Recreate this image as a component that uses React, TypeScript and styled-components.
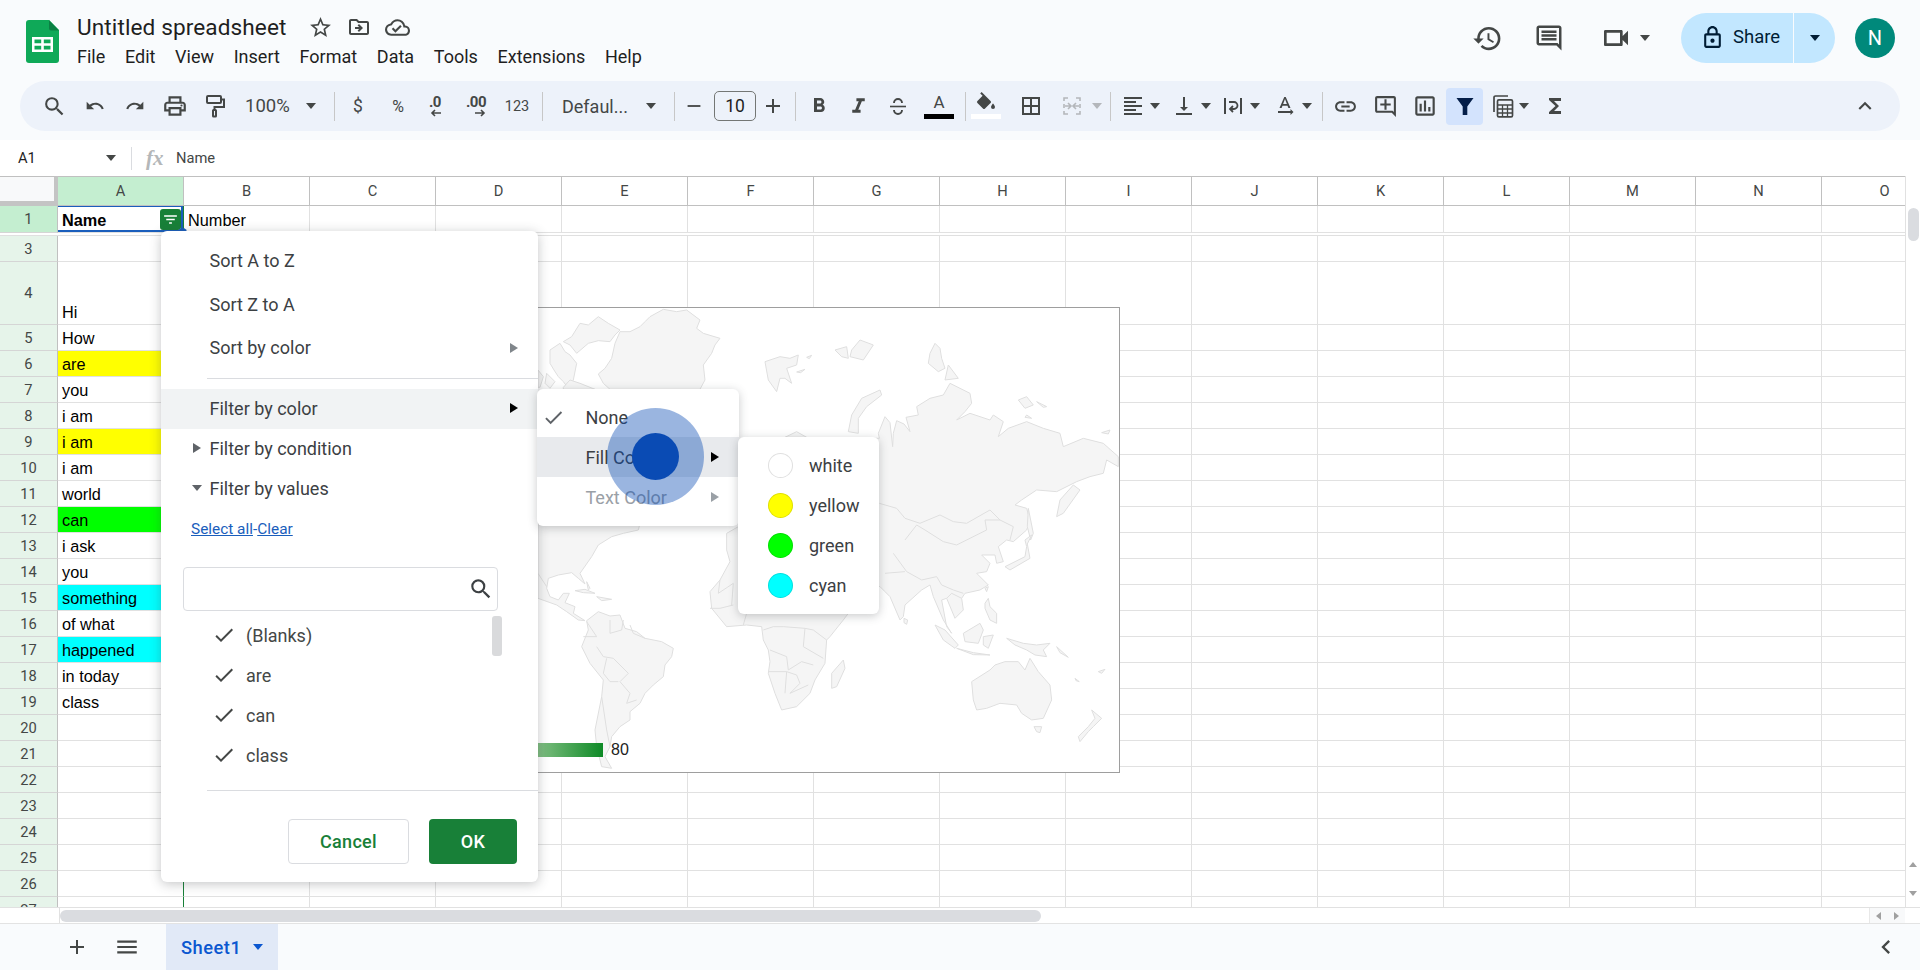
import React from "react";
import styled, { createGlobalStyle } from "styled-components";
import {
  MdSearch, MdUndo, MdRedo, MdOutlinePrint, MdStarBorder, MdOutlineDriveFileMove,
  MdOutlineCloudDone, MdHistory, MdOutlineComment, MdOutlineVideocam, MdOutlineLock, MdFormatBold,
  MdFormatItalic, MdBorderAll, MdFormatAlignLeft, MdVerticalAlignBottom,
  MdTextRotationNone, MdLink, MdOutlineAddComment, MdOutlineInsertChart, MdFunctions, MdExpandLess,
  MdAdd, MdRemove, MdMenu, MdCheck, MdChevronLeft, MdFilterList,
} from "react-icons/md";

const GlobalStyle = createGlobalStyle`
  html, body { margin: 0; padding: 0; background: #fff; }
  * { box-sizing: border-box; }
`;

const Page = styled.div`
  position: relative;
  width: 1920px;
  height: 970px;
  overflow: hidden;
  display: flex;
  flex-direction: column;
  background: #f9fbfd;
  font-family: Roboto, "Liberation Sans", sans-serif;
  color: #444746;
`;

/* ---------- header ---------- */
const TopBar = styled.header`
  height: 81px;
  flex: none;
  display: flex;
  padding: 20px 25px 0 26px;
`;
const TitleCol = styled.div`
  margin-left: 18px;
  margin-top: -7px;
`;
const TitleRow = styled.div`
  display: flex;
  align-items: center;
  height: 28px;
`;
const Title = styled.div`
  font-size: 22.6px;
  color: #1f1f1f;
  width: 210px;
  white-space: nowrap;
  letter-spacing: 0.1px;
`;
const TitleIcons = styled.div`
  display: flex;
  align-items: center;
  gap: 14px;
  margin-left: 21px;
  color: #444746;
`;
const MenuBar = styled.nav`
  display: flex;
  gap: 19.7px;
  margin-top: 5px;
  font-size: 18px;
  color: #1f1f1f;
`;
const RightGroup = styled.div`
  margin-left: auto;
  margin-top: -7px;
  display: flex;
  align-items: center;
  height: 50px;
`;
const HeadBtn = styled.div<{ $w: number; $pl?: number }>`
  width: ${(p) => p.$w}px;
  padding-left: ${(p) => p.$pl ?? 0}px;
  display: flex;
  align-items: center;
  justify-content: ${(p) => (p.$pl ? "flex-start" : "center")};
  gap: 8px;
  color: #444746;
`;
const ShareBtn = styled.div`
  width: 154px;
  height: 50px;
  border-radius: 25px;
  background: #c2e7ff;
  color: #001d35;
  display: flex;
  align-items: center;
  font-size: 18.5px;
`;
const ShareMain = styled.div`
  width: 113px;
  height: 100%;
  display: flex;
  align-items: center;
  padding-left: 19px;
  padding-bottom: 2px;
  gap: 8px;
  border-right: 1px solid #f9fbfd;
`;
const ShareDrop = styled.div`
  flex: 1;
  display: flex;
  justify-content: center;
`;
const Avatar = styled.div`
  width: 40px;
  height: 40px;
  margin-left: 20px;
  border-radius: 50%;
  background: #00897b;
  color: #fff;
  font-size: 20px;
  display: flex;
  align-items: center;
  justify-content: center;
`;

const Caret = styled.span<{ $color?: string }>`
  display: inline-block;
  width: 0;
  height: 0;
  flex: none;
  border-left: 5.5px solid transparent;
  border-right: 5.5px solid transparent;
  border-top: 6px solid ${(p) => p.$color ?? "#444746"};
`;

/* ---------- toolbar ---------- */
const Toolbar = styled.div`
  flex: none;
  height: 50px;
  margin: 0 20px 9px;
  padding: 0 14px;
  border-radius: 25px;
  background: #edf2fa;
  display: flex;
  align-items: center;
`;
const Tool = styled.div<{ $w: number; $gap?: number; $active?: boolean; $pl?: number; $size?: number }>`
  width: ${(p) => p.$w}px;
  height: ${(p) => (p.$active ? 37 : 40)}px;
  flex: none;
  display: flex;
  align-items: center;
  justify-content: ${(p) => (p.$pl !== undefined ? "space-between" : "center")};
  gap: ${(p) => p.$gap ?? 5}px;
  padding-left: ${(p) => p.$pl ?? 0}px;
  padding-right: ${(p) => (p.$pl !== undefined ? 18 : 0)}px;
  border-radius: 4px;
  background: ${(p) => (p.$active ? "#d3e3fd" : "transparent")};
  color: #444746;
  font-size: ${(p) => p.$size ?? 17.5}px;
`;
const Sep = styled.div<{ $ml?: number; $mr?: number }>`
  flex: none;
  width: 1px;
  height: 29px;
  background: #c7c7c7;
  margin-left: ${(p) => p.$ml ?? 0}px;
  margin-right: ${(p) => p.$mr ?? 0}px;
`;
const SizeBox = styled.div`
  width: 42px;
  height: 30px;
  margin-left: 1px;
  flex: none;
  border: 1px solid #747775;
  border-radius: 5px;
  font-size: 17.5px;
  display: flex;
  align-items: center;
  justify-content: center;
  color: #1f1f1f;
`;
const Stack = styled.div`
  display: flex;
  flex-direction: column;
  align-items: center;
  height: 30px;
  margin-bottom: 4px;
  justify-content: flex-end;
`;
const ColorBar = styled.div<{ $color: string }>`
  width: 30px;
  height: 5px;
  background: ${(p) => p.$color};
  margin-top: 1px;
`;
const ColorLetter = styled.span`
  font-size: 17px;
  line-height: 16px;
  margin-bottom: 3px;
  color: #444746;
`;
const DecText = styled.div`
  display: flex;
  flex-direction: column;
  align-items: flex-end;
  font-size: 15px;
  font-weight: 700;
  line-height: 14px;
  letter-spacing: -0.5px;
`;
const Spacer = styled.div`
  flex: 1;
`;

/* ---------- formula bar ---------- */
const FormulaBar = styled.div`
  flex: none;
  height: 36px;
  background: #fff;
  display: flex;
  align-items: center;
  font-size: 14.7px;
`;
const NameBox = styled.div`
  width: 132px;
  padding: 0 15px 0 18px;
  display: flex;
  align-items: center;
  justify-content: space-between;
  color: #1f1f1f;
  border-right: 1px solid #dadce0;
  height: 23px;
`;
const Fx = styled.span`
  font-family: "Liberation Serif", serif;
  font-style: italic;
  font-size: 21px;
  font-weight: 700;
  color: #b4b7b9;
  margin-left: 14px;
  width: 30px;
`;
const FormulaText = styled.span`
  color: #444746;
`;

/* ---------- sheet ---------- */
const GridArea = styled.div`
  flex: 1;
  min-height: 0;
  display: flex;
  background: #fff;
`;
const Sheet = styled.div`
  width: 1905px;
  overflow: hidden;
  display: flex;
  flex-direction: column;
`;
const SheetRow = styled.div<{ $h: number }>`
  display: flex;
  flex: none;
  height: ${(p) => p.$h}px;
`;
const Corner = styled.div`
  width: 58px;
  flex: none;
  background: #f8f9fa;
  border-top: 1px solid #c0c0c0;
  border-right: 4px solid #c4c4c4;
  border-bottom: 5px solid #c4c4c4;
`;
const ColHead = styled.div<{ $sel?: boolean }>`
  width: 126px;
  flex: none;
  display: flex;
  align-items: center;
  justify-content: center;
  font-size: 14.7px;
  color: #444746;
  background: ${(p) => (p.$sel ? "#c4eed0" : "#fff")};
  border-top: 1px solid #c0c0c0;
  border-right: 1px solid #c0c0c0;
  border-bottom: 1px solid #c0c0c0;
`;
const RowHead = styled.div<{ $sel?: boolean }>`
  width: 58px;
  flex: none;
  display: flex;
  align-items: center;
  justify-content: center;
  font-size: 14.7px;
  color: #444746;
  background: ${(p) => (p.$sel ? "#c4eed0" : "#e6f4ea")};
  border-right: 1px solid #c0c0c0;
  border-bottom: 1px solid #d5d5d5;
`;
const Cell = styled.div<{ $fill?: string; $bold?: boolean; $first?: boolean }>`
  position: relative;
  width: 126px;
  flex: none;
  display: flex;
  align-items: flex-end;
  padding: 0 4px;
  overflow: hidden;
  white-space: nowrap;
  font-family: "Liberation Sans", Arial, sans-serif;
  font-size: 16.3px;
  line-height: 23px;
  color: #000;
  font-weight: ${(p) => (p.$bold ? 700 : 400)};
  background: ${(p) => p.$fill ?? "#fff"};
  border-right: 1px solid ${(p) => (p.$first ? "#188038" : "#e1e1e1")};
  border-bottom: 1px solid #e1e1e1;
`;
const Selection = styled.div`
  position: absolute;
  inset: 0;
  border-top: 1px solid #1a5ebc;
  border-right: 2px solid #1a5ebc;
  border-bottom: 2px solid #1a5ebc;
  pointer-events: none;
`;
const FilterChip = styled.div`
  position: absolute;
  right: 2px;
  top: 3px;
  width: 21px;
  height: 21px;
  border-radius: 3px;
  background: #188038;
  color: #fff;
  display: flex;
  align-items: center;
  justify-content: center;
`;
const FillHandle = styled.div`
  position: absolute;
  left: 178px;
  top: 228px;
  width: 9px;
  height: 9px;
  border-radius: 50%;
  background: #1a5ebc;
`;
const FreezeGap = styled.div`
  flex: none;
  height: 3px;
  background: #fff;
  border-bottom: 1.5px solid #e0e0e0;
`;
const VScroll = styled.div`
  width: 15px;
  flex: none;
  display: flex;
  flex-direction: column;
  align-items: center;
  padding-top: 32px;
  background: #fff;
  border-left: 1px solid #e1e1e1;
`;
const VThumb = styled.div`
  width: 11px;
  height: 33px;
  border-radius: 6px;
  background: #dadce0;
`;
const VArrows = styled.div`
  margin-top: auto;
  height: 38px;
  margin-bottom: 9px;
  width: 100%;
  display: flex;
  flex-direction: column;
  align-items: center;
  justify-content: space-between;
  padding: 2px 0;
`;
const SmallTri = styled.span<{ $dir: "up" | "down" | "left" | "right" }>`
  width: 0;
  height: 0;
  border: 4px solid transparent;
  ${(p) => (p.$dir === "up" ? "border-bottom: 5px solid #a0a0a0; border-top-width: 0;" : "")}
  ${(p) => (p.$dir === "down" ? "border-top: 5px solid #a0a0a0; border-bottom-width: 0;" : "")}
  ${(p) => (p.$dir === "left" ? "border-right: 5px solid #a0a0a0; border-left-width: 0;" : "")}
  ${(p) => (p.$dir === "right" ? "border-left: 5px solid #a0a0a0; border-right-width: 0;" : "")}
`;
const HScroll = styled.div`
  flex: none;
  height: 16px;
  background: #fff;
  display: flex;
  align-items: center;
  border-top: 1px solid #e1e1e1;
`;
const HLead = styled.div`
  width: 60px;
  height: 100%;
  border-right: 1px solid #e1e1e1;
  flex: none;
`;
const HThumb = styled.div`
  width: 981px;
  height: 12px;
  border-radius: 6px;
  background: #dadce0;
`;
const HArrows = styled.div`
  margin-left: auto;
  width: 36px;
  height: 100%;
  margin-right: 15px;
  background: #f8f9fa;
  display: flex;
  align-items: center;
  justify-content: space-around;
  border-left: 1px solid #e8e8e8;
`;

/* ---------- tabs ---------- */
const TabBar = styled.footer`
  flex: none;
  height: 47px;
  display: flex;
  align-items: center;
  border-top: 1px solid #e3e3e3;
  padding-left: 62px;
  color: #444746;
`;
const TabIcon = styled.div`
  width: 50px;
  display: flex;
  justify-content: center;
  margin-left: -10px;
  margin-right: 10px;
`;
const SheetTab = styled.div`
  margin-left: 4px;
  width: 112px;
  height: 46px;
  background: #e1e9f7;
  color: #0b57d0;
  font-weight: 500;
  font-size: 18.3px;
  letter-spacing: 0.5px;
  display: flex;
  align-items: center;
  padding-left: 15px;
  gap: 12px;
`;
const CollapseTabs = styled.div`
  margin-left: auto;
  margin-right: 20px;
  display: flex;
`;

/* ---------- chart overlay ---------- */
const ChartCard = styled.div`
  position: absolute;
  left: 400px;
  top: 307px;
  width: 720px;
  height: 466px;
  background: #fff;
  border: 1px solid #9e9e9e;
`;
const ChartSvg = styled.svg`
  display: block;
  width: 100%;
  height: 100%;
`;
const Legend = styled.div`
  position: absolute;
  left: 130px;
  bottom: 13px;
  display: flex;
  align-items: center;
  gap: 8px;
  font-family: "Liberation Sans", Arial, sans-serif;
  font-size: 16px;
  color: #222;
`;
const LegendBar = styled.div`
  width: 72px;
  height: 14px;
  background: linear-gradient(90deg, #8cc48c, #0e8a26);
`;

/* ---------- filter menu ---------- */
const Panel = styled.div`
  position: absolute;
  left: 161px;
  top: 231px;
  width: 377px;
  height: 651px;
  background: #fff;
  border-radius: 6px;
  padding-top: 8px;
  box-shadow: 0 2px 12px rgba(60, 64, 67, 0.3);
  font-size: 18px;
  color: #3c4043;
`;
const MenuItem = styled.div<{ $h?: number; $shade?: string; $muted?: boolean; $pl?: number; $up?: boolean }>`
  height: ${(p) => p.$h ?? 40}px;
  display: flex;
  align-items: center;
  padding-left: ${(p) => p.$pl ?? 48.5}px;
  padding-right: 20px;
  padding-bottom: ${(p) => (p.$up ? 2 : 0)}px;
  background: ${(p) => p.$shade ?? "transparent"};
  color: ${(p) => (p.$muted ? "#9aa0a6" : "#3c4043")};
`;
const ItemLabel = styled.span`
  flex: 1;
`;
const RightTri = styled.span<{ $color?: string }>`
  width: 0;
  height: 0;
  flex: none;
  border-top: 5px solid transparent;
  border-bottom: 5px solid transparent;
  border-left: 8px solid ${(p) => p.$color ?? "#000"};
`;
const LeadSlot = styled.span`
  width: 21px;
  margin-right: 2.5px;
  display: flex;
  justify-content: center;
  align-items: center;
`;
const Divider = styled.div<{ $mt: number; $mb?: number }>`
  height: 1px;
  margin: ${(p) => p.$mt}px 0 ${(p) => p.$mb ?? 0}px 46px;
  background: #dadce0;
`;
const LinkRow = styled.div`
  height: 40px;
  display: flex;
  align-items: center;
  padding-left: 30px;
  font-size: 15.4px;
  color: #1a5ebc;
`;
const Link = styled.span`
  text-decoration: underline;
`;
const SearchBox = styled.div`
  margin: 18px 0 0 22px;
  width: 315px;
  height: 44px;
  border: 1px solid #dadce0;
  border-radius: 4px;
  display: flex;
  align-items: center;
  justify-content: flex-end;
  padding-right: 3px;
  color: #3c4043;
`;
const ValueList = styled.div`
  margin-top: 5px;
  height: 160px;
  display: flex;
`;
const ValueRows = styled.div`
  width: 331px;
  padding-left: 51px;
`;
const ValueRow = styled.div`
  height: 40px;
  display: flex;
  align-items: center;
  gap: 10px;
  padding-bottom: 2px;
  color: #444746;
`;
const ListThumb = styled.div`
  width: 10px;
  height: 40px;
  border-radius: 3px;
  background: #d9dadc;
`;
const Actions = styled.div`
  margin-top: 28px;
  display: flex;
  justify-content: flex-end;
  gap: 20px;
  padding-right: 21px;
`;
const Button = styled.div<{ $primary?: boolean }>`
  width: ${(p) => (p.$primary ? 88 : 121)}px;
  height: 45px;
  border-radius: 4px;
  display: flex;
  align-items: center;
  justify-content: center;
  font-size: 18px;
  font-weight: 500;
  letter-spacing: 0.3px;
  background: ${(p) => (p.$primary ? "#188038" : "#fff")};
  color: ${(p) => (p.$primary ? "#fff" : "#188038")};
  border: ${(p) => (p.$primary ? "none" : "1px solid #dadce0")};
`;
const ColorMenu = styled.div`
  position: absolute;
  left: 537px;
  top: 389px;
  width: 202px;
  height: 137px;
  padding-top: 8px;
  background: #fff;
  border-radius: 6px;
  box-shadow: 0 2px 10px rgba(60, 64, 67, 0.28);
  font-size: 18px;
`;
const CheckSlot = styled.span`
  width: 48.5px;
  padding-left: 5px;
  display: flex;
  color: #5f6368;
`;
const SwatchMenu = styled.div`
  position: absolute;
  left: 738px;
  top: 437px;
  width: 141px;
  height: 177px;
  padding: 8.7px 0 0 30px;
  background: #fff;
  border-radius: 6px;
  box-shadow: 0 2px 10px rgba(60, 64, 67, 0.28);
  font-size: 18px;
  color: #3c4043;
`;
const SwatchRow = styled.div`
  height: 40px;
  display: flex;
  align-items: center;
  gap: 16px;
`;
const Swatch = styled.span<{ $color: string }>`
  width: 25px;
  height: 25px;
  border-radius: 50%;
  flex: none;
  background: ${(p) => p.$color};
  border: 1px solid rgba(0, 0, 0, 0.12);
`;
const ClickHalo = styled.div`
  position: absolute;
  left: 607px;
  top: 408px;
  width: 97px;
  height: 97px;
  border-radius: 50%;
  background: rgba(10, 75, 180, 0.41);
  display: flex;
  align-items: center;
  justify-content: center;
`;
const ClickDot = styled.div`
  width: 47px;
  height: 47px;
  border-radius: 50%;
  background: #0a4bb4;
`;

/* ---------- drawings ---------- */
const SheetsLogo = () => (
  <svg width="33" height="43" viewBox="0 0 33 43">
    <path d="M3 0h20l10 10v30a3 3 0 0 1-3 3H3a3 3 0 0 1-3-3V3a3 3 0 0 1 3-3z" fill="#0fa958" />
    <path d="M23 0l10 10.5H25a2 2 0 0 1-2-2z" fill="#0b8043" />
    <path d="M6 17h21v15H6z M8.5 19.5v3.7h6.7v-3.7z M17.8 19.5v3.7h6.7v-3.7z M8.5 25.8v3.7h6.7v-3.7z M17.8 25.8v3.7h6.7v-3.7z" fill="#fff" fillRule="evenodd" />
  </svg>
);
const PaintIcon = () => (
  <svg width="24" height="26" viewBox="0 0 24 26" fill="none" stroke="#444746" strokeWidth="2">
    <rect x="4" y="3" width="14" height="7" rx="1" />
    <path d="M18 6.5h3v7.5h-9.5v3" />
    <rect x="10" y="17" width="3" height="6.5" rx=".6" />
  </svg>
);
const StrikeIcon = () => (
  <svg width="24" height="24" viewBox="0 0 24 24" fill="none" stroke="#444746" strokeWidth="1.9">
    <path d="M8 9a4 4 0 0 1 8 0" />
    <path d="M4 12.5h16" strokeWidth="1.6" />
    <path d="M8 16a4 4 0 0 0 8 0" />
  </svg>
);
const FillIcon = () => (
  <svg width="24" height="22" viewBox="0 0 24 20">
    <path d="M16.56 8.94 7.62 0 6.21 1.41l2.38 2.38-5.15 5.15a1.5 1.5 0 0 0 0 2.12l5.5 5.5a1.5 1.5 0 0 0 2.12 0l5.5-5.5c.59-.58.59-1.53 0-2.12zM19 11.5s-2 2.17-2 3.5a2 2 0 0 0 4 0c0-1.33-2-3.5-2-3.5z" fill="#444746" />
  </svg>
);
const MergeIcon = () => (
  <svg width="24" height="24" viewBox="0 0 24 24" fill="none" stroke="#b4b7bb" strokeWidth="1.6">
    <path d="M8 4H4v3M4 10v4M4 17v3h4M16 4h4v3M20 10v4M20 17v3h-4" />
    <path d="M5 12h5M8 9l3 3-3 3M19 12h-5M16 9l-3 3 3 3" />
  </svg>
);
const WrapIcon = () => (
  <svg width="24" height="24" viewBox="0 0 24 24" fill="none" stroke="#444746" strokeWidth="2">
    <path d="M4 4v16M20 4v16" />
    <path d="M8 8h5a3 3 0 0 1 0 7H9.5M12 12l-3 3 3 3" strokeWidth="1.8" />
  </svg>
);
const CalcIcon = () => (
  <svg width="26" height="26" viewBox="0 0 26 26" fill="none" stroke="#444746" strokeWidth="1.7">
    <path d="M4 19V4.5A1.5 1.5 0 0 1 5.5 3H18" />
    <rect x="7.5" y="6.8" width="15" height="17" rx="1.4" />
    <path d="M7.5 12h15M7.5 16h15M7.5 20h15M12.5 12v11M17.5 12v11" strokeWidth="1.3" />
  </svg>
);
const FunnelIcon = () => (
  <svg width="20" height="22" viewBox="0 0 20 22">
    <path d="M1.5 3h17l-6.2 8.5V20H7.7v-8.5z" fill="#041e49" />
  </svg>
);
const ShortArrow = ({ left }: { left?: boolean }) => (
  <svg width="11" height="8" viewBox="0 0 11 8" fill="none" stroke="#444746" strokeWidth="1.6">
    {left ? <path d="M11 4H2M5 1 2 4l3 3" /> : <path d="M0 4h9M6 1l3 3-3 3" />}
  </svg>
);

// land outlines traced from the reference, in 3x units of the crop they were read from
const upperLeft = [
  "100,125 125,110 150,70 175,75 205,50 235,70 270,90 255,105 240,125 205,122 175,130 140,160 120,135",
  "60,150 90,130 105,155 120,165 140,190 130,240 115,265 100,245 85,230 72,210 60,190",
  "24,210 40,230 30,262 24,262",
  "50,220 75,245 60,265 45,250",
  "100,262 120,240 150,250 195,268 100,268",
  "255,130 270,95 300,95 330,80 345,65 360,50 400,28 440,35 470,30 510,60 500,85 520,100 570,115 555,135 545,160 520,195 525,240 510,268 240,268 220,250 205,222 225,205 245,175",
  "705,185 750,170 780,175 805,165 800,195 770,205 785,250 765,235 750,235 740,275 715,240",
  "830,172 845,166 838,176",
  "800,216 825,208 812,218",
  "765,412 800,395 830,412",
];
const lowerLeft = [
  "24,-20 330,-20 325,0 280,10 245,20 205,45 185,80 150,130 165,162 145,145 125,128 85,135 55,145 50,175 60,200 85,210 100,190 118,190 105,218 135,230 130,250 165,272 145,270 110,245 80,225 24,205",
  "170,272 205,245 240,258 270,255 285,295 320,305 345,325 395,335 430,355 425,380 405,405 400,440 370,465 345,490 330,520 300,545 300,570 270,590 245,620 240,650 225,680 245,715 215,710 200,650 195,600 215,500 220,450 180,400 155,350 175,300",
  "135,182 165,178 195,190 160,188",
  "170,155 180,175 175,180",
  "625,-10 590,10 590,60 600,95 570,150 540,185 545,235 590,290 650,285 695,290 700,330 715,360 720,395 715,430 735,490 755,540 800,530 840,490 855,450 885,400 890,330 900,320 940,270 955,250 955,-10",
  "200,200 245,208 215,212",
];
const lowerLeftLines = [
  "170,275 200,320 160,320",
  "200,350 220,380 250,385 295,430 270,455 300,490 290,520 320,510",
  "230,385 220,430 240,455 265,455",
  "215,500 230,600 240,650",
  "240,270 240,310 275,300 280,270",
  "300,285 310,310 345,325",
  "700,300 730,290 760,290 825,295 820,350 880,385",
  "720,360 770,380 775,420 815,395 850,405",
  "715,425 770,425 765,490",
  "770,425 800,435 810,460 780,490 835,465",
  "650,250 640,285",
  "540,235 570,235 610,225",
  "570,150 565,190 610,160 605,225",
  "825,295 850,300 890,330",
  "24,130 50,170",
];
const upperRight = [
  "148,415 145,400 165,350 180,368 188,440 190,400 200,362 222,372 240,395 228,352 265,345 260,320 300,295 340,285 360,250 420,280 425,310 405,335 380,360 420,340 480,360 490,345 520,365 505,410 535,385 590,365 640,385 690,400 700,440 760,415 820,430 865,470 865,500 830,480 820,520 780,530 740,545 680,575 620,570 575,600 555,615 590,625 600,660 590,690 550,725 530,720 505,740 520,785 500,790 495,765 455,765 480,790 470,815 440,820 475,855 450,870 405,880 395,895 400,930 375,955 350,895 335,900 350,980 365,1000 340,960 310,890 300,855 275,870 225,915 220,950 210,960 180,890 165,875 150,860 100,850 -50,850 -50,415",
  "55,395 65,345 95,295 150,270 155,285 110,320 85,355 85,400",
  "15,150 50,140 55,175 35,170",
  "65,150 90,120 130,135 100,180 60,170",
  "300,160 315,130 330,145 335,175 345,205 325,215 295,190",
  "345,240 355,195 385,235",
  "565,300 590,290 610,315 585,325",
  "620,305 650,320 640,322",
  "590,345 605,355 585,352",
  "815,398 840,390 835,402",
  "680,650 690,600 730,555 750,570 700,640",
  "595,625 610,700 602,720 592,680",
];
const upperRightLines = [
  "148,610 200,625 225,655 270,670 330,645 370,665 410,670 480,630 510,660 550,680 540,720",
  "225,720 260,675 285,690 340,725 380,735 470,690 465,660 510,660",
  "190,760 230,815 275,840 320,830 335,855 370,870 400,880",
  "165,820 225,815",
  "350,895 365,880 395,895",
];
const lowerRight = [
  "525,110 585,80 590,50 585,30 605,15 592,42 600,85 540,120",
  "465,175 475,170 470,185",
  "465,220 475,205 480,230 500,250 500,280 480,270 465,235",
  "400,310 450,280 460,300 445,340 405,335",
  "315,285 345,300 385,345 375,355 340,330",
  "380,355 430,368 480,375 430,374",
  "460,320 490,315 475,355 460,345",
  "530,325 580,340 620,345 660,340 640,360 650,380 615,375 590,360 555,345",
  "425,455 480,420 495,405 525,395 565,395 585,420 600,385 625,425 660,465 665,510 640,565 605,570 575,550 560,525 510,520 470,535 440,540 430,510",
  "612,590 635,590 630,608 620,605",
  "785,540 815,565 790,590 775,605 750,635 745,620 775,590 795,565",
  "5,430 40,390 45,415 20,470 5,475",
  "222,265 233,270 230,283 222,278",
  "680,350 715,382 690,368",
  "735,445 748,455 738,452",
  "805,425 825,418 815,430",
];

const WorldMap = () => (
  <ChartSvg viewBox="401 308 718 464">
    <g fill="#f5f5f5" stroke="#dfdfdf" strokeWidth="3" strokeLinejoin="round">
      <g transform="translate(530 300) scale(.3333)">
        {upperLeft.map((pts) => <polygon key={pts} points={pts} />)}
      </g>
      <g transform="translate(530 530) scale(.3333)">
        {lowerLeft.map((pts) => <polygon key={pts} points={pts} />)}
        {lowerLeftLines.map((pts) => <polyline key={pts} points={pts} fill="none" />)}
      </g>
      <g transform="translate(830 300) scale(.3333)">
        {upperRight.map((pts) => <polygon key={pts} points={pts} />)}
        {upperRightLines.map((pts) => <polyline key={pts} points={pts} fill="none" />)}
      </g>
      <g transform="translate(830 530) scale(.3333)">
        {lowerRight.map((pts) => <polygon key={pts} points={pts} />)}
      </g>
    </g>
  </ChartSvg>
);

/* ---------- data ---------- */
const columns = "ABCDEFGHIJKLMNO".split("");
const menus = ["File", "Edit", "View", "Insert", "Format", "Data", "Tools", "Extensions", "Help"];
const Y = "#ffff00";
const G = "#00ff00";
const C = "#00ffff";
type RowData = { n: number; h: number; text?: string; fill?: string };
const rows: RowData[] = [
  { n: 3, h: 26 },
  { n: 4, h: 63, text: "Hi" },
  { n: 5, h: 26, text: "How" },
  { n: 6, h: 26, text: "are", fill: Y },
  { n: 7, h: 26, text: "you" },
  { n: 8, h: 26, text: "i am" },
  { n: 9, h: 26, text: "i am", fill: Y },
  { n: 10, h: 26, text: "i am" },
  { n: 11, h: 26, text: "world" },
  { n: 12, h: 26, text: "can", fill: G },
  { n: 13, h: 26, text: "i ask" },
  { n: 14, h: 26, text: "you" },
  { n: 15, h: 26, text: "something", fill: C },
  { n: 16, h: 26, text: "of what" },
  { n: 17, h: 26, text: "happened", fill: C },
  { n: 18, h: 26, text: "in today" },
  { n: 19, h: 26, text: "class" },
  ...Array.from({ length: 8 }, (_, i) => ({ n: 20 + i, h: 26 })),
];
const values = ["(Blanks)", "are", "can", "class"];
const swatches = [
  { name: "white", color: "#ffffff" },
  { name: "yellow", color: Y },
  { name: "green", color: G },
  { name: "cyan", color: C },
];

export default function App() {
  return (
    <Page>
      <GlobalStyle />
      <TopBar>
        <SheetsLogo />
        <TitleCol>
          <TitleRow>
            <Title>Untitled spreadsheet</Title>
            <TitleIcons>
              <MdStarBorder size={25} />
              <MdOutlineDriveFileMove size={24} />
              <MdOutlineCloudDone size={25} />
            </TitleIcons>
          </TitleRow>
          <MenuBar>
            {menus.map((m) => <span key={m}>{m}</span>)}
          </MenuBar>
        </TitleCol>
        <RightGroup>
          <HeadBtn $w={62}><MdHistory size={31} /></HeadBtn>
          <HeadBtn $w={62}><MdOutlineComment size={30} /></HeadBtn>
          <HeadBtn $w={101} $pl={20}><MdOutlineVideocam size={32} /><Caret /></HeadBtn>
          <ShareBtn>
            <ShareMain><MdOutlineLock size={25} /><span>Share</span></ShareMain>
            <ShareDrop><Caret $color="#001d35" /></ShareDrop>
          </ShareBtn>
          <Avatar>N</Avatar>
        </RightGroup>
      </TopBar>

      <Toolbar>
        <Tool $w={40}><MdSearch size={25} /></Tool>
        <Tool $w={41}><MdUndo size={20} /></Tool>
        <Tool $w={40}><MdRedo size={20} /></Tool>
        <Tool $w={40}><MdOutlinePrint size={26} /></Tool>
        <Tool $w={39}><PaintIcon /></Tool>
        <Tool $w={100} $pl={11} $size={18.5}><span>100%</span><Caret /></Tool>
        <Sep />
        <Tool $w={46}>$</Tool>
        <Tool $w={34} $size={16}>%</Tool>
        <Tool $w={40}><DecText>.0<ShortArrow left /></DecText></Tool>
        <Tool $w={42}><DecText>.00<ShortArrow /></DecText></Tool>
        <Tool $w={40} $size={14.5}>123</Tool>
        <Sep $ml={5} />
        <Tool $w={131} $pl={19} $size={18}><span>Defaul...</span><Caret /></Tool>
        <Sep />
        <Tool $w={38}><MdRemove size={22} /></Tool>
        <SizeBox>10</SizeBox>
        <Tool $w={34}><MdAdd size={24} /></Tool>
        <Sep $ml={5} />
        <Tool $w={46}><MdFormatBold size={24} /></Tool>
        <Tool $w={32}><MdFormatItalic size={25} /></Tool>
        <Tool $w={48}><StrikeIcon /></Tool>
        <Tool $w={34}><Stack><ColorLetter>A</ColorLetter><ColorBar $color="#000" /></Stack></Tool>
        <Sep $ml={9} />
        <Tool $w={40}><Stack><FillIcon /><ColorBar $color="#fff" /></Stack></Tool>
        <Tool $w={50}><MdBorderAll size={24} /></Tool>
        <Tool $w={50} $gap={8}><MergeIcon /><Caret $color="#b4b7bb" /></Tool>
        <Sep $ml={4} $mr={4} />
        <Tool $w={50}><MdFormatAlignLeft size={24} /><Caret /></Tool>
        <Tool $w={52}><MdVerticalAlignBottom size={24} /><Caret /></Tool>
        <Tool $w={47}><WrapIcon /><Caret /></Tool>
        <Tool $w={56}><MdTextRotationNone size={24} /><Caret /></Tool>
        <Sep $ml={2} />
        <Tool $w={44}><MdLink size={25} /></Tool>
        <Tool $w={37}><MdOutlineAddComment size={25} /></Tool>
        <Tool $w={42}><MdOutlineInsertChart size={26} /></Tool>
        <Tool $w={37} $active><FunnelIcon /></Tool>
        <Tool $w={53} $gap={3}><CalcIcon /><Caret /></Tool>
        <Tool $w={38}><MdFunctions size={24} /></Tool>
        <Spacer />
        <Tool $w={42}><MdExpandLess size={26} /></Tool>
      </Toolbar>

      <FormulaBar>
        <NameBox><span>A1</span><Caret /></NameBox>
        <Fx>fx</Fx>
        <FormulaText>Name</FormulaText>
      </FormulaBar>

      <GridArea>
        <Sheet>
          <SheetRow $h={30}>
            <Corner />
            {columns.map((c, i) => <ColHead key={c} $sel={i === 0}>{c}</ColHead>)}
          </SheetRow>
          <SheetRow $h={27}>
            <RowHead $sel>1</RowHead>
            <Cell $bold $first>
              Name
              <Selection />
              <FilterChip><MdFilterList size={17} /></FilterChip>
            </Cell>
            <Cell>Number</Cell>
            {columns.slice(2).map((c) => <Cell key={c} />)}
          </SheetRow>
          <FreezeGap />
          {rows.map((r) => (
            <SheetRow key={r.n} $h={r.h}>
              <RowHead>{r.n}</RowHead>
              <Cell $fill={r.fill} $first>{r.text}</Cell>
              {columns.slice(1).map((c) => <Cell key={c} />)}
            </SheetRow>
          ))}
        </Sheet>
        <VScroll>
          <VThumb />
          <VArrows><SmallTri $dir="up" /><SmallTri $dir="down" /></VArrows>
        </VScroll>
      </GridArea>
      <HScroll>
        <HLead />
        <HThumb />
        <HArrows><SmallTri $dir="left" /><SmallTri $dir="right" /></HArrows>
      </HScroll>

      <TabBar>
        <TabIcon><MdAdd size={24} /></TabIcon>
        <TabIcon><MdMenu size={26} /></TabIcon>
        <SheetTab>Sheet1<Caret $color="#0b57d0" /></SheetTab>
        <CollapseTabs><MdChevronLeft size={28} /></CollapseTabs>
      </TabBar>

      <FillHandle />
      <ChartCard>
        <WorldMap />
        <Legend><LegendBar /><span>80</span></Legend>
      </ChartCard>

      <Panel>
        <MenuItem $h={43.5}>Sort A to Z</MenuItem>
        <MenuItem $h={43.5}>Sort Z to A</MenuItem>
        <MenuItem $h={43.5}><ItemLabel>Sort by color</ItemLabel><RightTri $color="#80868b" /></MenuItem>
        <Divider $mt={8.5} $mb={10} />
        <MenuItem $shade="#f1f3f4" $up><ItemLabel>Filter by color</ItemLabel><RightTri /></MenuItem>
        <MenuItem $pl={25} $up><LeadSlot><RightTri $color="#5f6368" /></LeadSlot>Filter by condition</MenuItem>
        <MenuItem $pl={25} $up><LeadSlot><Caret $color="#5f6368" /></LeadSlot>Filter by values</MenuItem>
        <LinkRow><Link>Select all</Link>-<Link>Clear</Link></LinkRow>
        <SearchBox><MdSearch size={26} /></SearchBox>
        <ValueList>
          <ValueRows>
            {values.map((v) => (
              <ValueRow key={v}><MdCheck size={24} /><span>{v}</span></ValueRow>
            ))}
          </ValueRows>
          <ListThumb />
        </ValueList>
        <Divider $mt={14} />
        <Actions>
          <Button>Cancel</Button>
          <Button $primary>OK</Button>
        </Actions>
      </Panel>

      <ColorMenu>
        <MenuItem $pl={0}><CheckSlot><MdCheck size={23} /></CheckSlot><ItemLabel>None</ItemLabel></MenuItem>
        <MenuItem $shade="#e8eaed"><ItemLabel>Fill Color</ItemLabel><RightTri /></MenuItem>
        <MenuItem $muted><ItemLabel>Text Color</ItemLabel><RightTri $color="#9aa0a6" /></MenuItem>
      </ColorMenu>
      <SwatchMenu>
        {swatches.map((s) => (
          <SwatchRow key={s.name}><Swatch $color={s.color} /><span>{s.name}</span></SwatchRow>
        ))}
      </SwatchMenu>
      <ClickHalo><ClickDot /></ClickHalo>
    </Page>
  );
}
